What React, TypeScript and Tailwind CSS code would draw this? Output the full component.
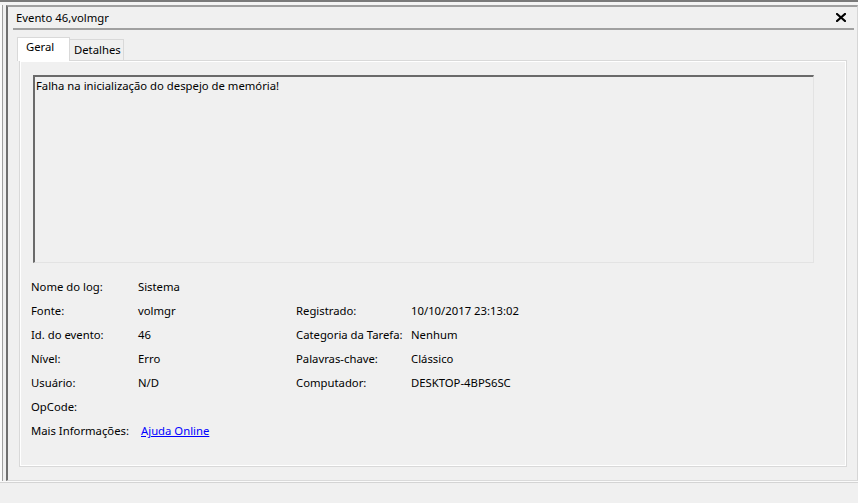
import { ReactNode } from "react";

interface Field {
    label: string;
    value?: ReactNode;
}

const leftFields: Field[] = [
    { label: "Nome do log:", value: "Sistema" },
    { label: "Fonte:", value: "volmgr" },
    { label: "Id. do evento:", value: "46" },
    { label: "Nível:", value: "Erro" },
    { label: "Usuário:", value: "N/D" },
    { label: "OpCode:" },
    {
        label: "Mais Informações:",
        value: (
            <a href="#" className="ml-[3px] text-[#0000ff] underline">
                Ajuda Online
            </a>
        ),
    },
];

const rightFields: (Field | null)[] = [
    null,
    { label: "Registrado:", value: "10/10/2017 23:13:02" },
    { label: "Categoria da Tarefa:", value: "Nenhum" },
    { label: "Palavras-chave:", value: "Clássico" },
    { label: "Computador:", value: "DESKTOP-4BPS6SC" },
    null,
    null,
];

function CloseIcon() {
    return (
        <svg width="10" height="9" viewBox="0 0 10 9" className="block">
            <path d="M1 1L9 8M9 1L1 8" stroke="#000" strokeWidth="2.2" strokeLinecap="square" />
        </svg>
    );
}

export default function App() {
    return (
        <div className="w-[858px] h-[503px] bg-[#f0f0f0] flex flex-col overflow-hidden text-[11.3px] leading-none text-black font-['Segoe_UI','Noto_Sans',sans-serif]">
            <div className="h-[2px] bg-[#7a7a7a] shrink-0" />
            <div className="h-[3px] bg-[#f4f4f4] shrink-0" />
            <div className="h-[476px] flex shrink-0">
                <div className="w-[6px] flex shrink-0">
                    <div className="w-[2px] bg-[#fbfbfb]" />
                    <div className="w-px bg-[#a0a0a0]" />
                </div>
                <div className="flex-1 flex flex-col border-l-2 border-l-[#6f6f6f] border-t-2 border-t-[#a0a0a0] border-r border-r-[#d6d6d6] border-b border-b-[#dadada]">
                    {/* title */}
                    <div className="h-[21px] flex items-center justify-between pl-[8px] pr-[11px] shrink-0">
                        <span className="pt-px">Evento 46,volmgr</span>
                        <CloseIcon />
                    </div>
                    <div className="h-[2px] bg-[#a0a0a0] ml-[5px] mr-[3px] shrink-0" />

                    {/* tabs */}
                    <div className="flex items-end h-[30px] pl-[9px] shrink-0">
                        <div className="relative z-10 h-[24px] w-[53px] -mb-px bg-white border border-b-0 border-[#d9d9d9] flex items-start pt-[3px] pl-[8px]">
                            Geral
                        </div>
                        <div className="h-[21px] w-[54px] bg-[#f0f0f0] border border-l-0 border-b-0 border-[#d9d9d9] flex items-start pt-[4px] pl-[4px]">
                            Detalhes
                        </div>
                    </div>

                    {/* panel */}
                    <div className="ml-[11px] mr-[10px] h-[407px] border border-[#d9d9d9] shrink-0">
                        <div className="h-full border border-white px-[12px] pt-[13px]">
                            <div className="h-[188px] mr-[19px] border-t-2 border-l-2 border-t-[#6a6a6a] border-l-[#6a6a6a] border-r border-b border-r-[#e3e3e3] border-b-[#e3e3e3] bg-[#f0f0f0] pl-[1px] pt-[3px]">
                                Falha na inicialização do despejo de memória!
                            </div>
                            <div className="mt-[12px] grid grid-cols-[107px_158px_115px_1fr] -ml-[2px]">
                                {leftFields.map((f, i) => {
                                    const r = rightFields[i];
                                    return (
                                        <div key={f.label} className="contents">
                                            <div className="h-[24px] flex items-center">{f.label}</div>
                                            <div className="h-[24px] flex items-center">{f.value}</div>
                                            <div className="h-[24px] flex items-center">{r?.label}</div>
                                            <div className="h-[24px] flex items-center">{r?.value}</div>
                                        </div>
                                    );
                                })}
                            </div>
                        </div>
                    </div>
                </div>
            </div>
            <div className="h-px bg-[#fafafa] shrink-0" />
            <div className="h-px bg-[#d4d4d4] shrink-0" />
            <div className="flex-1" />
        </div>
    );
}
